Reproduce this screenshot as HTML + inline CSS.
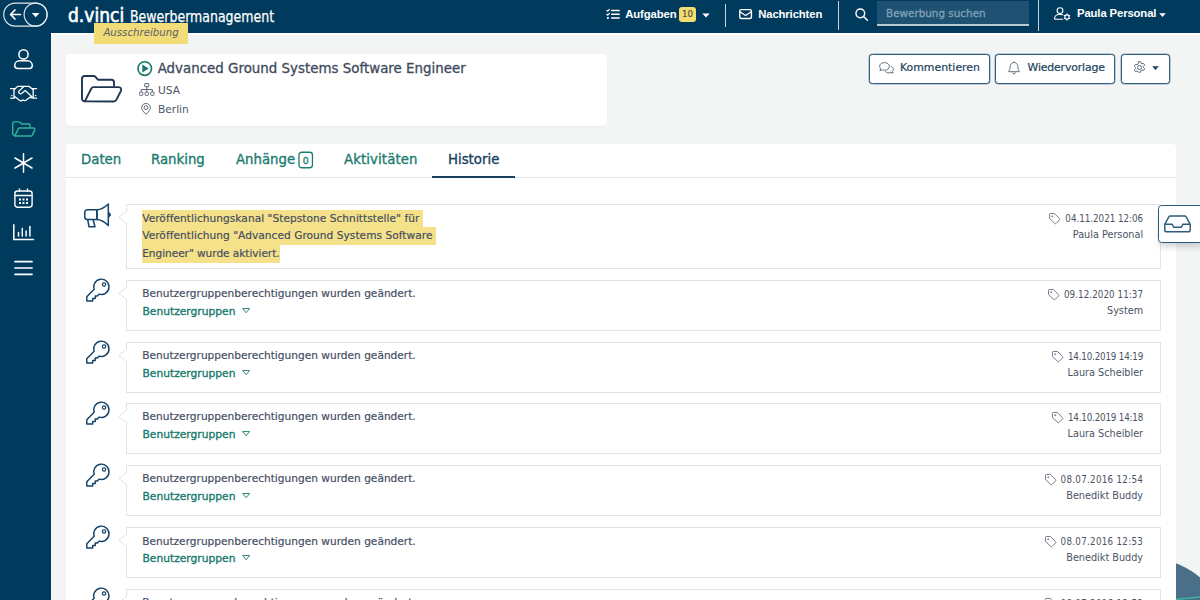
<!DOCTYPE html>
<html lang="de">
<head>
<meta charset="utf-8">
<title>d.vinci Bewerbermanagement</title>
<style>
*{box-sizing:border-box;margin:0;padding:0}
html,body{width:1200px;height:600px;overflow:hidden}
body{background:#f3f5f5;font-family:"DejaVu Sans","Liberation Sans",sans-serif;color:#3d4a5c;position:relative}
.abs{position:absolute}
svg{display:block;overflow:visible}
/* top bar + sidebar */
#top{position:absolute;left:0;top:0;width:1200px;height:33px;background:#003a5d}
#side{position:absolute;left:0;top:0;width:51px;height:600px;background:#003a5d}
.w{color:#fff}
.logo{position:absolute;left:67.500px;top:2.700px;font-family:"DejaVu Sans Condensed","DejaVu Sans",sans-serif;font-size:19.5px;line-height:26px;color:#fff;letter-spacing:0px;-webkit-text-stroke:0.6px #fff;transform:scaleX(.975);transform-origin:0 0}
.app{position:absolute;left:130px;top:7px;font-family:"DejaVu Sans Condensed","DejaVu Sans",sans-serif;font-size:15.6px;line-height:20px;color:#fff;transform-origin:0 0;transform:scaleX(.894);white-space:nowrap;-webkit-text-stroke:.25px #fff}
.tag{position:absolute;left:94px;top:23px;width:94px;height:21px;background:#f2dc78;font-style:italic;font-size:10.2px;line-height:20px;text-align:center;color:#5b6168}
.nav{position:absolute;top:0;height:33px;line-height:29px;font-family:"Liberation Sans",sans-serif;font-size:11.3px;letter-spacing:-.12px;font-weight:bold;color:#fff;white-space:nowrap}
.vdiv{position:absolute;width:1px;background:#c9d5dd}
.badge10{position:absolute;left:679px;top:7px;width:17px;height:15px;border-radius:3px;background:#f4dc72;color:#4e4a3a;font-size:8.600px;line-height:14.500px;text-align:center;font-weight:normal;-webkit-text-stroke:.15px #4e4a3a}
.search{position:absolute;left:877px;top:1px;width:152px;height:25px;background:#1f5172;border-bottom:2px solid #b9c9d3;color:#7fa2b7;font-size:10.4px;line-height:24px;padding-left:9px;-webkit-text-stroke:.3px #7fa2b7}
/* header card */
.card{position:absolute;background:#fff;border-radius:4px}
#hcard{left:66px;top:54px;width:541px;height:72px;box-shadow:0 1px 1px rgba(0,0,0,.04)}
.title{position:absolute;left:157.700px;top:59.200px;font-size:13.4px;line-height:20px;color:#3d4a5c;white-space:nowrap;-webkit-text-stroke:.3px #3d4a5c}
.sub{position:absolute;left:158px;font-size:10.6px;line-height:14px;color:#4a5668;white-space:nowrap}
.btn{position:absolute;top:54px;height:30px;border:1px solid #2f5f7f;box-shadow:0 0 0 .5px rgba(47,95,127,.55);-webkit-text-stroke:.22px #23455f;border-radius:3.500px;background:#fff;font-size:10.9px;line-height:26.500px;color:#23455f;white-space:nowrap}
/* tab panel */
#panel{left:66px;top:144px;width:1110px;height:470px;border-radius:4px 4px 0 0}
.tabline{position:absolute;left:66px;top:177px;width:1110px;height:1px;background:#e3e8ec}
.tab{position:absolute;top:150px;font-size:13.3px;line-height:20px;color:#1c7c70;white-space:nowrap;-webkit-text-stroke:.35px #1c7c70}
.tab.act{color:#173f5f;-webkit-text-stroke-color:#173f5f}
.uline{position:absolute;left:432px;top:176px;width:83px;height:2px;background:#173f5f}
.cnt{position:absolute;left:298.200px;top:151.500px;width:15px;height:17px;padding-top:1.500px;font-size:9.300px;line-height:15px;-webkit-text-stroke:.3px #1c7c70;text-align:center;color:#1c7c70}
/* history */
.item{position:absolute;left:126px;width:1035px;border:1px solid #dfe4ea;background:#fff}
.msg{position:absolute;left:15.200px;top:calc(3.500px + var(--m,0px));font-size:10.6px;line-height:17.6px;color:#434d62;white-space:nowrap;-webkit-text-stroke:.18px #434d62}
.hl{background:#f5e189;padding:1.800px 0 4.200px 0}
.lnk{position:absolute;left:15.500px;top:21.900px;font-size:10.7px;line-height:17px;color:#187a6d;white-space:nowrap;-webkit-text-stroke:.35px #187a6d}
.date{position:absolute;right:16.900px;top:6px;font-family:"DejaVu Sans Condensed","DejaVu Sans",sans-serif;font-size:9.7px;line-height:16px;color:#4a5364;white-space:nowrap;text-align:right}
.who{position:absolute;right:16.900px;top:21.500px;font-size:9.7px;line-height:16px;color:#4a5364;white-space:nowrap;text-align:right}
.ico{position:absolute}
.tg{left:-16px;top:1.500px}
.tri{display:inline-block;vertical-align:1.500px;margin-left:7px}
</style>
</head>
<body>
<!-- decorative circle bottom right -->
<div class="abs" style="left:1065px;top:558px;width:164px;height:164px;border-radius:50%;background:#4a7089"></div>
<svg class="ico" style="left:1176px;top:590px" width="24" height="10" viewBox="0 0 24 10"><path d="M0 9.400L24 7" stroke="#3fae9c" stroke-width="1.600" fill="none"/></svg>

<div id="top"></div>
<div id="side"></div>
<div class="abs" style="left:51px;top:33px;width:1149px;height:1px;background:#fff"></div><div class="abs" style="left:51px;top:34px;width:1149px;height:1px;background:rgba(255,255,255,.55)"></div><div class="abs" style="left:51px;top:33px;width:1px;height:567px;background:rgba(255,255,255,.3)"></div>

<!-- back pill -->
<svg class="ico" style="left:3px;top:2px" width="46" height="26" viewBox="0 0 46 26" fill="none" stroke="#e3e9ee" stroke-width="1.150">
<rect x=".700" y="1.100" width="43.400" height="23" rx="11.500"/>
<circle cx="32.600" cy="12.600" r="11.500"/>
<path d="M17.400 12.500H7.700M12 8l-4.500 4.500 4.500 4.500" stroke="#fff" stroke-width="1.700" stroke-linecap="round" stroke-linejoin="round"/>
<path d="M28.800 11h7.700l-3.850 4.200z" fill="#fff" stroke="none"/>
</svg>

<div class="logo">d.vinci</div>
<div class="app" id="app">Bewerbermanagement</div>
<div class="tag">Ausschreibung</div>

<!-- nav -->
<svg class="ico" style="left:606px;top:8.800px" width="14" height="10.500" viewBox="0 0 14 11" fill="none" stroke="#fff" stroke-width="1.500" stroke-linecap="round">
<path d="M5.500 1.500h8M5.500 5.500h8M5.500 9.500h8"/><path d="M.6 1.500l.9.900L3.200.500M.6 5.500l.9.900L3.200 4.500" stroke-width="1.200"/><circle cx="1.700" cy="9.500" r=".600" stroke-width="1.100"/>
</svg>
<div class="nav" style="left:625.300px">Aufgaben</div>
<div class="badge10">10</div>
<svg class="ico" style="left:702px;top:13px" width="8" height="5" viewBox="0 0 8 5"><path d="M.3.5h7.4L4 4.6z" fill="#fff"/></svg>
<div class="vdiv" style="left:725px;top:4px;height:23px"></div>
<svg class="ico" style="left:739.300px;top:8.600px" width="13.200" height="10.200" viewBox="0 0 14 11" fill="none" stroke="#fff" stroke-width="1.500" stroke-linejoin="round">
<rect x=".7" y=".7" width="12.6" height="9.6" rx="1.6"/><path d="M.9 3l6.1 4 6.1-4"/>
</svg>
<div class="nav" style="left:758.200px">Nachrichten</div>
<div class="vdiv" style="left:838px;top:1px;height:29px"></div>
<svg class="ico" style="left:855px;top:7.700px" width="13.300" height="13.300" viewBox="0 0 14 14" fill="none" stroke="#fff" stroke-width="1.500" stroke-linecap="round">
<circle cx="5.6" cy="5.6" r="4.6"/><path d="M9 9l4 4"/>
</svg>
<div class="search">Bewerbung suchen</div>
<div class="vdiv" style="left:1038px;top:0;height:31px"></div>
<svg class="ico" style="left:1054px;top:7px" width="18" height="14" viewBox="0 0 18 14" fill="none" stroke="#fff" stroke-width="1.1">
<circle cx="6" cy="3.6" r="2.9"/><path d="M9 12.3H1.2c-.4 0-.6-.3-.6-.6 0-2.400 2-4.200 4.400-4.200h2c.9 0 1.700.2 2.300.6"/>
<circle cx="13" cy="10" r="2.100"/><path d="M13 6.600v1.300M13 12.100v1.300M10 8.300l1.100.65M14.900 11.050l1.100.65M10 11.700l1.100-.65M14.900 8.950l1.100-.65" stroke-width="1.200"/>
</svg>
<div class="nav" style="left:1077px;top:-1px">Paula Personal</div>
<svg class="ico" style="left:1159px;top:13px" width="7" height="4" viewBox="0 0 7 4"><path d="M.2.300h6.600L3.500 3.900z" fill="#fff"/></svg>

<!-- sidebar icons -->
<svg class="ico" style="left:14px;top:49px" width="19" height="20" viewBox="0 0 19 20" fill="none" stroke="#fff" stroke-width="1.5">
<circle cx="9.500" cy="5.400" r="4.600"/><path d="M3.600 19.400h11.800c1.600 0 2.900-1.300 2.900-2.900 0-2.600-2.100-4.700-4.700-4.700H5.400c-2.600 0-4.700 2.100-4.700 4.700 0 1.600 1.300 2.900 2.900 2.900z"/>
</svg>
<svg class="ico" style="left:10px;top:85px" width="27" height="17" viewBox="0 0 27 17" fill="none" stroke="#fff" stroke-width="1.300" stroke-linejoin="round" stroke-linecap="round">
<path d="M.600 3.700h4M4 3.700v9.400M.600 13.100h4M26.600 3.700h-4M23.200 3.700v9.400M26.600 13.100h-4"/>
<path d="M4.600 4.300l3-2.900h11.600l3.400 2.900"/>
<path d="M13.600 1.800L9.300 5.700c-.8.700-.8 1.800-.1 2.500.7.700 1.800.7 2.600.1l3.400-2.700 5.700 5.200c.6.600.7 1.500.2 2.200"/>
<path d="M4.600 11.500l4.800 3.800c.9.600 2 .7 2.900.1l.7-.4.900.4c.8.400 1.700.3 2.400-.3l4.800-3.600 1.500.6"/>
<circle cx="1.700" cy="10.500" r=".4" fill="#fff" stroke-width=".5"/><circle cx="25.500" cy="10.500" r=".4" fill="#fff" stroke-width=".5"/>
</svg>
<svg class="ico" style="left:11.500px;top:120.800px" width="23.500" height="16" viewBox="0 0 25 17" fill="none" stroke="#2fb597" stroke-width="1.500" stroke-linejoin="round">
<path d="M3 16L.8 14V2.500c0-.9.700-1.600 1.600-1.600h5c.5 0 .9.200 1.200.5l1.500 1.700h7.500c.9 0 1.600.7 1.600 1.600v2.300"/><path d="M3 16l3.600-7.600c.3-.6.900-1 1.500-1h14.500c1.200 0 2 1.200 1.500 2.300L21.600 15c-.3.600-.9 1-1.500 1z"/>
</svg>
<svg class="ico" style="left:14px;top:153px" width="19" height="20" viewBox="0 0 19 20" fill="none" stroke="#fff" stroke-width="1.500" stroke-linecap="round">
<path d="M9.500.8v18.400M1 5l17 10M18 5L1 15"/>
</svg>
<svg class="ico" style="left:14px;top:188px" width="19" height="20" viewBox="0 0 19 20" fill="none" stroke="#fff" stroke-width="1.400">
<rect x=".9" y="3" width="17.200" height="16.200" rx="2.600"/><path d="M.9 7.500h17.200M5.500.5v3.500M13.500.5v3.500"/>
<path d="M5 10.500h2v2H5zM8.500 10.500h2v2h-2zM12 10.500h2v2h-2zM5 14h2v2H5zM8.500 14h2v2h-2zM12 14h2v2h-2z" fill="#fff" stroke="none"/>
</svg>
<svg class="ico" style="left:13px;top:224px" width="21" height="17" viewBox="0 0 21 17" fill="none" stroke="#fff" stroke-width="1.500" stroke-linecap="round">
<path d="M.8.800v14.700h19.700"/><path d="M5.500 12V8.500M9.300 12V4.500M13.100 12V7M16.900 12V2.500"/>
</svg>
<svg class="ico" style="left:14px;top:260px" width="19" height="16" viewBox="0 0 19 16" fill="none" stroke="#fff" stroke-width="1.700" stroke-linecap="round">
<path d="M1 1.700h17M1 8h17M1 14.300h17"/>
</svg>

<!-- header card -->
<div class="card" id="hcard"></div>
<svg class="ico" style="left:81px;top:75px" width="41" height="28" viewBox="0 0 41 28" fill="none" stroke="#1f3550" stroke-width="1.900" stroke-linejoin="round">
<path d="M3.800 26.400C2.200 26.400 1 25.300 1 23.800V3.500C1 2 2 1 3.500 1h9c.8 0 1.500.3 2 .9l2.400 2.800h13.500c1.500 0 2.600 1.100 2.600 2.600v4.200"/>
<path d="M3.800 26.400l6.400-12.700c.5-1 1.500-1.600 2.500-1.600h25c1.900 0 3.100 1.900 2.300 3.600l-4.700 9.200c-.5 1-1.500 1.600-2.500 1.600z"/>
</svg>
<svg class="ico" style="left:137px;top:61px" width="15.500" height="15.500" viewBox="0 0 15.500 15.500">
<circle cx="7.750" cy="7.600" r="6.800" fill="none" stroke="#17786b" stroke-width="1.600"/><path d="M5.300 3.600l6.400 4-6.400 4z" fill="#17786b"/>
</svg>
<div class="title">Advanced Ground Systems Software Engineer</div>
<svg class="ico" style="left:139px;top:83.300px" width="15.500" height="13" viewBox="0 0 15.500 13" fill="none" stroke="#5c6778" stroke-width="1">
<rect x="5.700" y=".5" width="4.100" height="3.200" rx=".6"/><rect x=".5" y="9" width="3.300" height="3.400" rx=".8"/><rect x="6.100" y="9" width="3.300" height="3.400" rx=".8"/><rect x="11.700" y="9" width="3.300" height="3.400" rx=".8"/>
<path d="M7.750 3.700v5.300M2.150 9V6.500h11.200V9"/>
</svg>
<div class="sub" style="top:83px">USA</div>
<svg class="ico" style="left:141.300px;top:102.500px" width="10" height="12" viewBox="0 0 10 12" fill="none" stroke="#5c6778" stroke-width="1">
<path d="M5 11.400C3.500 9.700.6 7 .6 4.600.6 2.300 2.600.5 5 .5s4.400 1.800 4.400 4.100c0 2.400-2.900 5.100-4.400 6.800z"/><circle cx="5" cy="4.600" r="1.900"/>
</svg>
<div class="sub" style="top:102px">Berlin</div>

<!-- buttons -->
<div class="btn" style="left:869px;width:121px;padding-left:30px">Kommentieren</div>
<svg class="ico" style="left:879px;top:62px" width="15" height="12" viewBox="0 0 15 12" fill="none" stroke="#5c6f82" stroke-width="1" stroke-linejoin="round">
<path d="M5.500.6C2.800.6.600 2.200.600 4.300c0 .9.400 1.700 1.100 2.400L.9 8.600l2.400-.8c.7.300 1.400.4 2.200.4 2.700 0 4.900-1.700 4.900-3.800S8.200.6 5.500.6z"/><path d="M11.800 4.200c1.500.5 2.600 1.700 2.600 3.100 0 .8-.4 1.600-1 2.200l.7 1.700-2.200-.7c-.6.200-1.300.4-2 .4-1.600 0-3-.7-3.800-1.700"/>
</svg>
<div class="btn" style="left:995px;width:120px;padding-left:31.500px;letter-spacing:-.15px">Wiedervorlage</div>
<svg class="ico" style="left:1008px;top:61px" width="12" height="14" viewBox="0 0 12 14" fill="none" stroke="#5c6f82" stroke-width="1" stroke-linejoin="round">
<path d="M6 .5v1M6 1.500c-2.200 0-3.800 1.700-3.800 3.800 0 2.800-.9 4.100-1.600 4.800-.2.200 0 .6.300.6h10.200c.3 0 .5-.4.300-.6-.7-.7-1.600-2-1.600-4.800 0-2.100-1.600-3.800-3.800-3.800zM4.600 11.500c0 .8.600 1.400 1.400 1.400s1.400-.6 1.400-1.400"/>
</svg>
<div class="btn" style="left:1121px;width:49px"></div>
<svg class="ico" style="left:1133px;top:61.400px" width="13" height="13" viewBox="0 0 13 13" fill="none" stroke="#5c6f82" stroke-width="1" stroke-linejoin="round">
<circle cx="6.500" cy="6.500" r="2"/><path d="M5.400.6h2.200l.4 1.600 1 .6 1.600-.5 1.100 1.900-1.200 1.100v1.200l1.200 1.100-1.100 1.900-1.600-.5-1 .6-.4 1.600H5.400L5 10.600l-1-.6-1.600.5-1.100-1.900 1.200-1.100V6.300L1.300 5.200l1.100-1.900 1.600.5 1-.6z"/>
</svg>
<svg class="ico" style="left:1152px;top:66px" width="7" height="4" viewBox="0 0 7 4"><path d="M.2.200h6.600L3.500 3.900z" fill="#1f3f5c"/></svg>

<!-- tab panel -->
<div class="card" id="panel"></div>
<div class="tabline"></div>
<div class="tab" style="left:81px">Daten</div>
<div class="tab" style="left:151px">Ranking</div>
<div class="tab" style="left:236px">Anhänge</div>
<svg class="ico" style="left:297px;top:150px" width="18" height="20" viewBox="0 0 18 20"><rect x="1.950" y="2.250" width="13.500" height="15.500" rx="2.800" fill="none" stroke="#1c7c70" stroke-width="1.300"/></svg>
<div class="cnt">0</div>
<div class="tab" style="left:344px;letter-spacing:.1px">Aktivitäten</div>
<div class="tab act" style="left:448px">Historie</div>
<div class="uline"></div>

<!-- history items -->
<div class="item" style="top:204px;height:65px">
  <svg class="ico" style="left:-9px;top:6px" width="10" height="13" viewBox="0 0 10 13"><path d="M9.500.200L.800 6.400l8.700 6.200z" fill="#fff"/><path d="M8.700.200L.800 6.400l7.900 6.200" fill="none" stroke="#dde3ea" stroke-width="1"/></svg><svg class="ico" style="left:-43px;top:-2.500px" width="27" height="25" viewBox="0 0 27 25" fill="none" stroke="#13436a" stroke-width="1.500" stroke-linejoin="round"><path d="M12.900 6.700H3.300C1.900 6.700.800 7.800.800 9.200v4.800c0 1.400 1.100 2.500 2.500 2.500h9.600"/><path d="M12.900 6.700c4.500 0 8.300-2.700 11.400-5.700v21.500c-3.100-3-6.900-6-11.400-6z"/><path d="M12.900 6.700v9.800M3.700 16.500l1.300 7.300h6l-1.900-7.300"/><path d="M24.700 9.800c1 0 1.800.9 1.800 2s-.8 2-1.800 2" fill="#13436a" stroke-width="1"/></svg><div class="msg" style="letter-spacing:.04px;--m:1px;line-height:17.700px"><span class="hl" style="padding-right:3.300px">Veröffentlichungskanal "Stepstone Schnittstelle" für</span><br><span class="hl" style="padding-right:3.300px">Veröffentlichung "Advanced Ground Systems Software</span><br><span class="hl" style="letter-spacing:-.06px">Engineer" wurde aktiviert.</span></div>
  <div class="date"><svg class="ico tg" width="11.300" height="11.300" viewBox="0 0 12 12" fill="none" stroke="#596379" stroke-width=".900" stroke-linejoin="round"><path d="M.500 1.500a1 1 0 0 1 1-1h4.200l5.500 5.500a1 1 0 0 1 0 1.400l-3.700 3.700a1 1 0 0 1-1.400 0L.500 5.700z"/><circle cx="3.400" cy="3.400" r=".600" fill="#596379" stroke-width=".600"/></svg><span style="letter-spacing:0.00px">04.11.2021 12:06</span></div><div class="who">Paula Personal</div>
</div>
<div class="item" style="top:280px;height:51px"><svg class="ico" style="left:-9px;top:6px" width="10" height="13" viewBox="0 0 10 13"><path d="M9.500.200L.800 6.400l8.700 6.200z" fill="#fff"/><path d="M8.700.200L.800 6.400l7.900 6.200" fill="none" stroke="#dde3ea" stroke-width="1"/></svg><svg class="ico key" style="left:-41.500px;top:-3px" width="24.500" height="24" viewBox="0 0 25 24" fill="none" stroke="#13436a" stroke-width="1.500" stroke-linejoin="round"><path d="M8.300 11.300L.800 18.800v4.400h6v-2.600h2.600v-2.400h2.200l1.900-2A7.800 7.800 0 1 0 8.300 11.300z"/><circle cx="18.400" cy="6.400" r="1.700" stroke-width="1.200"/></svg><div class="msg">Benutzergruppenberechtigungen wurden geändert.</div><div class="lnk">Benutzergruppen<svg class="tri" width="8.300" height="5.500" viewBox="0 0 9 6" fill="none" stroke="#1c7c70" stroke-width="1" stroke-linejoin="round"><path d="M.700.600h7.600L4.500 5.200z"/></svg></div><div class="date"><svg class="ico tg" width="11.300" height="11.300" viewBox="0 0 12 12" fill="none" stroke="#596379" stroke-width=".900" stroke-linejoin="round"><path d="M.500 1.500a1 1 0 0 1 1-1h4.200l5.500 5.500a1 1 0 0 1 0 1.400l-3.700 3.700a1 1 0 0 1-1.400 0L.500 5.700z"/><circle cx="3.400" cy="3.400" r=".600" fill="#596379" stroke-width=".600"/></svg><span style="letter-spacing:0.09px">09.12.2020 11:37</span></div><div class="who">System</div></div>
<div class="item" style="top:342px;height:51px"><svg class="ico" style="left:-9px;top:6px" width="10" height="13" viewBox="0 0 10 13"><path d="M9.500.200L.800 6.400l8.700 6.200z" fill="#fff"/><path d="M8.700.200L.800 6.400l7.900 6.200" fill="none" stroke="#dde3ea" stroke-width="1"/></svg><svg class="ico key" style="left:-41.500px;top:-3px" width="24.500" height="24" viewBox="0 0 25 24" fill="none" stroke="#13436a" stroke-width="1.500" stroke-linejoin="round"><path d="M8.300 11.300L.800 18.800v4.400h6v-2.600h2.600v-2.400h2.200l1.900-2A7.800 7.800 0 1 0 8.300 11.300z"/><circle cx="18.400" cy="6.400" r="1.700" stroke-width="1.200"/></svg><div class="msg">Benutzergruppenberechtigungen wurden geändert.</div><div class="lnk">Benutzergruppen<svg class="tri" width="8.300" height="5.500" viewBox="0 0 9 6" fill="none" stroke="#1c7c70" stroke-width="1" stroke-linejoin="round"><path d="M.700.600h7.600L4.500 5.200z"/></svg></div><div class="date"><svg class="ico tg" width="11.300" height="11.300" viewBox="0 0 12 12" fill="none" stroke="#596379" stroke-width=".900" stroke-linejoin="round"><path d="M.500 1.500a1 1 0 0 1 1-1h4.200l5.500 5.500a1 1 0 0 1 0 1.400l-3.700 3.700a1 1 0 0 1-1.400 0L.500 5.700z"/><circle cx="3.400" cy="3.400" r=".600" fill="#596379" stroke-width=".600"/></svg><span style="letter-spacing:-0.16px">14.10.2019 14:19</span></div><div class="who">Laura Scheibler</div></div>
<div class="item" style="top:403px;height:51px"><svg class="ico" style="left:-9px;top:6px" width="10" height="13" viewBox="0 0 10 13"><path d="M9.500.200L.800 6.400l8.700 6.200z" fill="#fff"/><path d="M8.700.200L.800 6.400l7.900 6.200" fill="none" stroke="#dde3ea" stroke-width="1"/></svg><svg class="ico key" style="left:-41.500px;top:-3px" width="24.500" height="24" viewBox="0 0 25 24" fill="none" stroke="#13436a" stroke-width="1.500" stroke-linejoin="round"><path d="M8.300 11.300L.800 18.800v4.400h6v-2.600h2.600v-2.400h2.200l1.900-2A7.800 7.800 0 1 0 8.300 11.300z"/><circle cx="18.400" cy="6.400" r="1.700" stroke-width="1.200"/></svg><div class="msg">Benutzergruppenberechtigungen wurden geändert.</div><div class="lnk">Benutzergruppen<svg class="tri" width="8.300" height="5.500" viewBox="0 0 9 6" fill="none" stroke="#1c7c70" stroke-width="1" stroke-linejoin="round"><path d="M.700.600h7.600L4.500 5.200z"/></svg></div><div class="date"><svg class="ico tg" width="11.300" height="11.300" viewBox="0 0 12 12" fill="none" stroke="#596379" stroke-width=".900" stroke-linejoin="round"><path d="M.500 1.500a1 1 0 0 1 1-1h4.200l5.500 5.500a1 1 0 0 1 0 1.400l-3.700 3.700a1 1 0 0 1-1.400 0L.500 5.700z"/><circle cx="3.400" cy="3.400" r=".600" fill="#596379" stroke-width=".600"/></svg><span style="letter-spacing:-0.16px">14.10.2019 14:18</span></div><div class="who">Laura Scheibler</div></div>
<div class="item" style="top:465px;height:51px"><svg class="ico" style="left:-9px;top:6px" width="10" height="13" viewBox="0 0 10 13"><path d="M9.500.200L.800 6.400l8.700 6.200z" fill="#fff"/><path d="M8.700.200L.800 6.400l7.900 6.200" fill="none" stroke="#dde3ea" stroke-width="1"/></svg><svg class="ico key" style="left:-41.500px;top:-3px" width="24.500" height="24" viewBox="0 0 25 24" fill="none" stroke="#13436a" stroke-width="1.500" stroke-linejoin="round"><path d="M8.300 11.300L.800 18.800v4.400h6v-2.600h2.600v-2.400h2.200l1.900-2A7.800 7.800 0 1 0 8.300 11.300z"/><circle cx="18.400" cy="6.400" r="1.700" stroke-width="1.200"/></svg><div class="msg">Benutzergruppenberechtigungen wurden geändert.</div><div class="lnk">Benutzergruppen<svg class="tri" width="8.300" height="5.500" viewBox="0 0 9 6" fill="none" stroke="#1c7c70" stroke-width="1" stroke-linejoin="round"><path d="M.700.600h7.600L4.500 5.200z"/></svg></div><div class="date"><svg class="ico tg" width="11.300" height="11.300" viewBox="0 0 12 12" fill="none" stroke="#596379" stroke-width=".900" stroke-linejoin="round"><path d="M.500 1.500a1 1 0 0 1 1-1h4.200l5.500 5.500a1 1 0 0 1 0 1.400l-3.700 3.700a1 1 0 0 1-1.400 0L.500 5.700z"/><circle cx="3.400" cy="3.400" r=".600" fill="#596379" stroke-width=".600"/></svg><span style="letter-spacing:0.30px">08.07.2016 12:54</span></div><div class="who">Benedikt Buddy</div></div>
<div class="item" style="top:527px;height:51px;--m:1px"><svg class="ico" style="left:-9px;top:6px" width="10" height="13" viewBox="0 0 10 13"><path d="M9.500.200L.800 6.400l8.700 6.200z" fill="#fff"/><path d="M8.700.200L.800 6.400l7.900 6.200" fill="none" stroke="#dde3ea" stroke-width="1"/></svg><svg class="ico key" style="left:-41.500px;top:-3px" width="24.500" height="24" viewBox="0 0 25 24" fill="none" stroke="#13436a" stroke-width="1.500" stroke-linejoin="round"><path d="M8.300 11.300L.800 18.800v4.400h6v-2.600h2.600v-2.400h2.200l1.900-2A7.800 7.800 0 1 0 8.300 11.300z"/><circle cx="18.400" cy="6.400" r="1.700" stroke-width="1.200"/></svg><div class="msg">Benutzergruppenberechtigungen wurden geändert.</div><div class="lnk">Benutzergruppen<svg class="tri" width="8.300" height="5.500" viewBox="0 0 9 6" fill="none" stroke="#1c7c70" stroke-width="1" stroke-linejoin="round"><path d="M.700.600h7.600L4.500 5.200z"/></svg></div><div class="date"><svg class="ico tg" width="11.300" height="11.300" viewBox="0 0 12 12" fill="none" stroke="#596379" stroke-width=".900" stroke-linejoin="round"><path d="M.500 1.500a1 1 0 0 1 1-1h4.200l5.500 5.500a1 1 0 0 1 0 1.400l-3.700 3.700a1 1 0 0 1-1.400 0L.500 5.700z"/><circle cx="3.400" cy="3.400" r=".600" fill="#596379" stroke-width=".600"/></svg><span style="letter-spacing:0.30px">08.07.2016 12:53</span></div><div class="who">Benedikt Buddy</div></div>
<div class="item" style="top:589px;height:51px"><svg class="ico" style="left:-9px;top:6px" width="10" height="13" viewBox="0 0 10 13"><path d="M9.500.200L.800 6.400l8.700 6.200z" fill="#fff"/><path d="M8.700.200L.800 6.400l7.900 6.200" fill="none" stroke="#dde3ea" stroke-width="1"/></svg><svg class="ico key" style="left:-41.500px;top:-3px" width="24.500" height="24" viewBox="0 0 25 24" fill="none" stroke="#13436a" stroke-width="1.500" stroke-linejoin="round"><path d="M8.300 11.300L.800 18.800v4.400h6v-2.600h2.600v-2.400h2.200l1.900-2A7.800 7.800 0 1 0 8.300 11.300z"/><circle cx="18.400" cy="6.400" r="1.700" stroke-width="1.200"/></svg><div class="msg">Benutzergruppenberechtigungen wurden geändert.</div><div class="lnk">Benutzergruppen<svg class="tri" width="8.300" height="5.500" viewBox="0 0 9 6" fill="none" stroke="#1c7c70" stroke-width="1" stroke-linejoin="round"><path d="M.700.600h7.600L4.500 5.200z"/></svg></div><div class="date"><svg class="ico tg" width="11.300" height="11.300" viewBox="0 0 12 12" fill="none" stroke="#596379" stroke-width=".900" stroke-linejoin="round"><path d="M.500 1.500a1 1 0 0 1 1-1h4.200l5.500 5.500a1 1 0 0 1 0 1.400l-3.700 3.700a1 1 0 0 1-1.400 0L.500 5.700z"/><circle cx="3.400" cy="3.400" r=".600" fill="#596379" stroke-width=".600"/></svg><span style="letter-spacing:0.30px">08.07.2016 12:52</span></div><div class="who">Benedikt Buddy</div></div>

<!-- floating inbox -->
<div class="abs" style="left:1158.300px;top:205px;width:46px;height:38.300px;background:#fff;border:1.800px solid #2a5878;border-radius:3.500px;box-shadow:0 6px 6px -2px rgba(0,0,0,.17)"></div>
<svg class="ico" style="left:1164px;top:214.600px" width="27" height="17.700" viewBox="0 0 28 18" fill="none" stroke="#2d5c7b" stroke-width="1.500" stroke-linejoin="round">
<path d="M.8 9.500L5 1.800c.3-.6.900-1 1.600-1h14.800c.7 0 1.300.4 1.600 1l4.200 7.700v5.500c0 1.200-1 2.200-2.200 2.200H3c-1.200 0-2.200-1-2.200-2.200z"/><path d="M.8 9.500h7.700l1.500 3h8l1.500-3h7.700"/>
</svg>
</body>
</html>
